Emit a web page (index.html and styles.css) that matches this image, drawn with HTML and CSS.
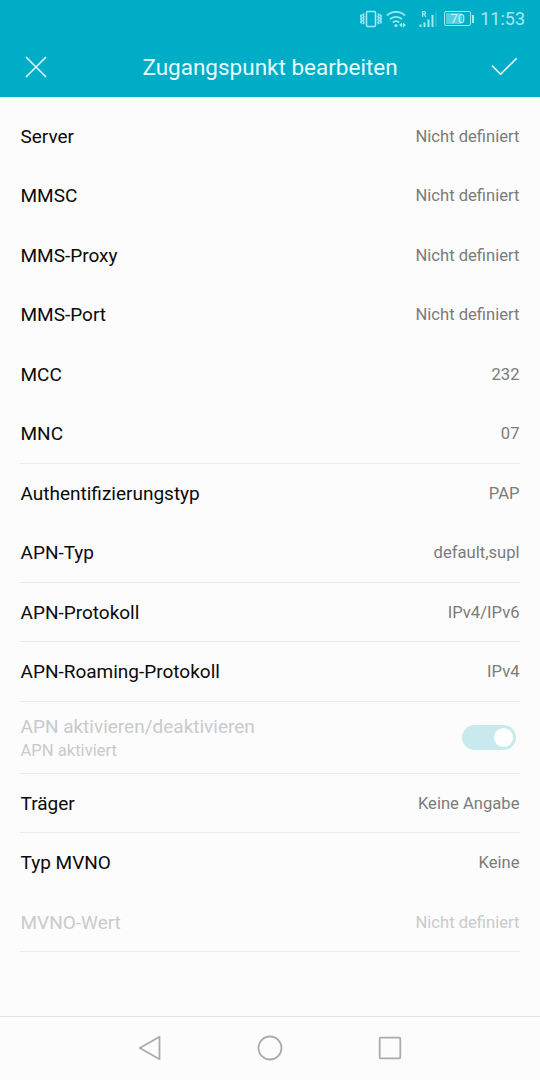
FILE: index.html
```
<!DOCTYPE html>
<html lang="de">
<head>
    <meta charset="UTF-8">
    <meta name="viewport" content="width=device-width, initial-scale=1.0">
    <title>Zugangspunkt bearbeiten</title>
    <link rel="stylesheet" href="styles.css">
</head>
<body>
    <div class="screen">
        <header class="header">
            <div class="status-bar">
                <svg class="icon-vibrate" width="22" height="18" viewBox="0 0 22 18">
                    <rect x="6.500" y="1.500" width="9" height="15" rx="1.200" stroke-width="1.600"/>
                    <path d="M4.200 3.500L2.800 5l1.400 1.500L2.800 8l1.400 1.500L2.800 11l1.400 1.500L2.800 14M1.700 4.500L.6 6l1.100 1.500L.6 9l1.100 1.500L.6 12l1.100 1.500M17.800 3.500L19.200 5l-1.400 1.500L19.200 8l-1.400 1.500 1.400 1.500-1.400 1.500 1.400 1.500M20.300 4.500l1.100 1.500-1.100 1.500L21.400 9l-1.100 1.500 1.100 1.500-1.100 1.500" stroke-width="1.300"/>
                </svg>
                <svg class="icon-wifi" width="22" height="18" viewBox="0 0 22 18">
                    <path d="M1 5.500a13.200 13.200 0 0 1 18 0M4 9.200a8.900 8.900 0 0 1 12 0M6.800 12.500a4.800 4.800 0 0 1 6.400 0" stroke-width="1.800"/>
                    <circle class="solid" cx="10" cy="15.500" r="1.600"/>
                    <path class="solid" d="M13 15l3-2.600v5.200zM20 15l-3-2.600v5.200z"/>
                </svg>
                <svg class="icon-signal" width="18" height="18" viewBox="0 0 18 18">
                    <path d="M1.500 17v-2.500M5.500 17v-4.500M9.500 17V9.500M13.500 17V5" stroke-width="2"/>
                    <path class="faint" d="M17 17V1.500" stroke-width="1"/>
                    <path d="M3.600 7V1.500h1.600a1.300 1.300 0 0 1 0 2.700H3.600M5.300 4.200L6.800 7" stroke-width="1.200"/>
                </svg>
                <div class="battery"><span>70</span></div>
                <span class="clock">11:53</span>
            </div>
            <div class="title-bar">
                <svg class="icon-close" width="22" height="22" viewBox="0 0 22 22">
                    <path d="M1 1l20 20M21 1L1 21" stroke-width="1.600"/>
                </svg>
                <h1 class="title">Zugangspunkt bearbeiten</h1>
                <svg class="icon-check" width="27" height="20" viewBox="0 0 27 20">
                    <path d="M1 8.600l8.600 8.600L25.600 1.400" stroke-width="1.600"/>
                </svg>
            </div>
        </header>

        <main class="settings">
            <div class="row"><span class="label">Server</span><span class="value">Nicht definiert</span></div>
            <div class="row"><span class="label">MMSC</span><span class="value">Nicht definiert</span></div>
            <div class="row"><span class="label">MMS-Proxy</span><span class="value">Nicht definiert</span></div>
            <div class="row"><span class="label">MMS-Port</span><span class="value">Nicht definiert</span></div>
            <div class="row"><span class="label">MCC</span><span class="value">232</span></div>
            <div class="row divider"><span class="label">MNC</span><span class="value">07</span></div>
            <div class="row"><span class="label">Authentifizierungstyp</span><span class="value">PAP</span></div>
            <div class="row divider"><span class="label">APN-Typ</span><span class="value">default,supl</span></div>
            <div class="row divider"><span class="label">APN-Protokoll</span><span class="value">IPv4/IPv6</span></div>
            <div class="row divider"><span class="label">APN-Roaming-Protokoll</span><span class="value">IPv4</span></div>
            <div class="row row-tall divider disabled">
                <div class="label-group">
                    <span class="label">APN aktivieren/deaktivieren</span>
                    <span class="summary">APN aktiviert</span>
                </div>
                <div class="switch"></div>
            </div>
            <div class="row divider"><span class="label">Träger</span><span class="value">Keine Angabe</span></div>
            <div class="row"><span class="label">Typ MVNO</span><span class="value">Keine</span></div>
            <div class="row divider disabled"><span class="label">MVNO-Wert</span><span class="value">Nicht definiert</span></div>
        </main>

        <nav class="nav-bar">
            <svg width="26" height="26" viewBox="0 0 26 26">
                <path d="M2.800 13L22.500 1.800v22.400z"/>
            </svg>
            <svg width="26" height="26" viewBox="0 0 26 26">
                <circle cx="13" cy="13" r="11.500"/>
            </svg>
            <svg width="26" height="26" viewBox="0 0 26 26">
                <rect x="2.700" y="2.700" width="20.600" height="20.600" rx="1"/>
            </svg>
        </nav>
    </div>
</body>
</html>
```
FILE: styles.css
```
:root {
    --teal: #00adc6;
    --status: #a0eaf4;
    --line: #e9e9e9;
    --page-bg: #fcfcfc;
}

* {
    box-sizing: border-box;
}

body {
    margin: 0;
    background: var(--page-bg);
    font-family: Roboto, sans-serif;
    color: #0a0a0a;
}

svg {
    display: block;
    flex: none;
    fill: none;
    stroke: currentColor;
    stroke-linejoin: round;
}

.screen {
    height: 1080px;
    display: flex;
    flex-direction: column;
}

/* Header */
.header {
    height: 97px;
    background: var(--teal);
    color: #e6fcff;
}

.status-bar {
    height: 37px;
    display: flex;
    align-items: center;
    justify-content: flex-end;
    padding-right: 15px;
    color: var(--status);
}

.solid {
    fill: currentColor;
    stroke: none;
}

.faint {
    opacity: 0.4;
}

.icon-wifi {
    margin-left: 4px;
}

.icon-signal {
    margin-left: 11px;
}

.battery {
    position: relative;
    width: 27px;
    height: 15px;
    margin-left: 7px;
    border: 1px solid var(--status);
    border-radius: 2px;
    background: linear-gradient(90deg, #55cede 70%, transparent 70%) content-box;
    padding: 1px;
    color: #c4f5fa;
    font-size: 12.5px;
    line-height: 12px;
    text-align: center;
}

.battery::after {
    content: '';
    position: absolute;
    top: 3px;
    right: -4px;
    width: 2px;
    height: 8px;
    background: var(--status);
}

.clock {
    margin-left: 9px;
    font-size: 18px;
    line-height: 24px;
}

.title-bar {
    height: 60px;
    display: flex;
    align-items: center;
    justify-content: space-between;
    padding: 0 22px 0 25px;
}

.title {
    margin: 0;
    padding-left: 2px;
    font-size: 22.5px;
    font-weight: 400;
}

/* Settings list */
.settings {
    flex: 1;
    padding: 9.5px 20px 0;
}

.row {
    height: 59.5px;
    display: flex;
    align-items: center;
    justify-content: space-between;
    padding: 1px 0.5px 0;
    border-bottom: 1px solid transparent;
}

.row-tall {
    height: 72px;
    padding-top: 0;
}

.divider {
    border-bottom-color: var(--line);
}

.label {
    font-size: 19px;
}

.value {
    font-size: 16.6px;
    color: #7b7b7b;
}

.label-group {
    display: flex;
    flex-direction: column;
    gap: 3px;
}

.summary {
    font-size: 16.6px;
}

.disabled,
.disabled .value {
    color: #cacaca;
}

.switch {
    width: 54px;
    height: 25px;
    margin-right: 4px;
    padding: 3px;
    border-radius: 13px;
    background: #c8eaee;
}

.switch::after {
    content: '';
    display: block;
    width: 19px;
    height: 19px;
    margin-left: auto;
    border-radius: 50%;
    background: #fff;
}

/* Navigation */
.nav-bar {
    height: 64px;
    display: flex;
    align-items: center;
    justify-content: center;
    gap: 94px;
    padding-bottom: 2px;
    border-top: 1px solid #e2e2e2;
    color: #ababab;
}

.nav-bar svg {
    stroke-width: 1.8;
}
```
